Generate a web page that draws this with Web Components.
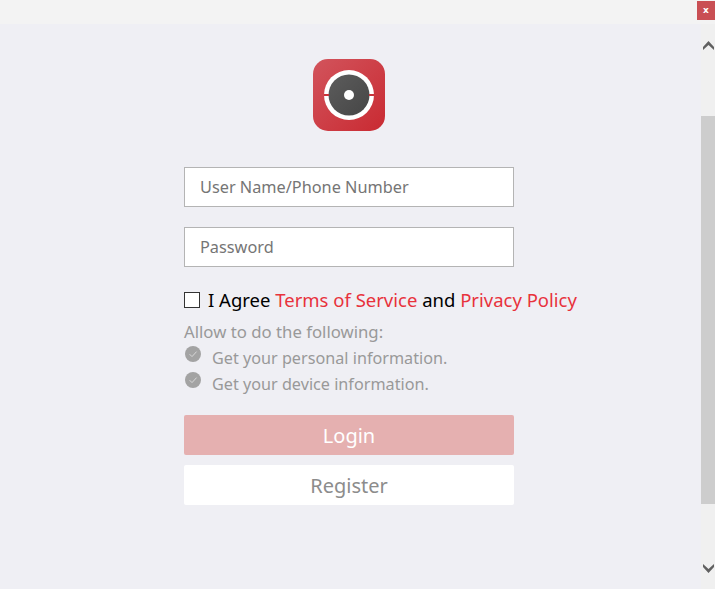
<!DOCTYPE html>
<html>
<head>
<meta charset="utf-8">
<title>Login</title>
<style>
  html, body { margin: 0; height: 100%; overflow: hidden; }
  body { font-family: "Noto Sans", "Open Sans", sans-serif; }
</style>
</head>
<body>
<login-window>
  <app-logo></app-logo>
  <login-field>User Name/Phone Number</login-field>
  <login-field>Password</login-field>
  <agree-row></agree-row>
  <permission-list>
    <permission-item>Get your personal information.</permission-item>
    <permission-item>Get your device information.</permission-item>
  </permission-list>
  <login-button kind="primary">Login</login-button>
  <login-button>Register</login-button>
</login-window>

<script>
class LoginWindow extends HTMLElement {
  constructor() {
    super();
    this.attachShadow({ mode: "open" }).innerHTML = `
      <style>
        :host { display: flex; flex-direction: column; width: 715px; height: 589px; background: #efeff4; overflow: hidden; }
        .title { display: flex; justify-content: flex-end; align-items: flex-start; height: 24px; background: #f3f3f3; flex: none; }
        .close { width: 18px; height: 19px; margin-top: 1px; background: #c94f54; color: #fff; font: bold 9px/18px "DejaVu Sans", sans-serif; text-align: center; }
        .body { display: flex; flex: 1; min-height: 0; }
        .content { flex: 1; display: flex; flex-direction: column; align-items: flex-start; padding: 35px 0 0 184px; }
        .bar { flex: none; width: 14px; display: flex; flex-direction: column; background: #f0f0f0; }
        .arrow { flex: none; height: 92px; display: block; }
        .arrow.down { height: 85px; }
        .arrow svg { display: block; margin: 17px 0 0 2px; }
        .arrow.down svg { margin-top: 60px; }
        .thumb { flex: 1; background: #cdcdcd; }
      </style>
      <div class="title"><div class="close">x</div></div>
      <div class="body">
        <div class="content"><slot></slot></div>
        <div class="bar">
          <span class="arrow"><svg width="11" height="9" viewBox="0 0 11 9"><path d="M5.5 0 L11 6 L11 9 L5.5 4 L0 9 L0 6 Z" fill="#606060"/></svg></span>
          <div class="thumb"></div>
          <span class="arrow down"><svg width="11" height="9" viewBox="0 0 11 9"><path d="M5.5 9 L11 3 L11 0 L5.5 5 L0 0 L0 3 Z" fill="#606060"/></svg></span>
        </div>
      </div>`;
  }
}

class AppLogo extends HTMLElement {
  constructor() {
    super();
    this.attachShadow({ mode: "open" }).innerHTML = `
      <style>
        :host { display: block; width: 72px; height: 72px; margin: 0 0 36px 129px; }
        svg { display: block; }
      </style>
      <svg width="72" height="72" viewBox="0 0 72 72">
        <defs>
          <linearGradient id="g" x1="0" y1="0" x2="1" y2="1">
            <stop offset="0" stop-color="#d2545c"/>
            <stop offset="1" stop-color="#c92a32"/>
          </linearGradient>
          <linearGradient id="d" x1="0" y1="0" x2="1" y2="1">
            <stop offset="0" stop-color="#5c5c5c"/>
            <stop offset="1" stop-color="#464646"/>
          </linearGradient>
        </defs>
        <rect width="72" height="72" rx="15" fill="url(#g)"/>
        <circle cx="36" cy="36" r="25" fill="#fff"/>
        <circle cx="36" cy="36" r="20.5" fill="url(#d)"/>
        <rect x="11" y="35" width="5" height="2" fill="#c9333b"/>
        <rect x="56" y="35" width="5" height="2" fill="#c9333b"/>
        <circle cx="36" cy="36" r="5" fill="#fff"/>
      </svg>`;
  }
}

class LoginField extends HTMLElement {
  constructor() {
    super();
    this.attachShadow({ mode: "open" }).innerHTML = `
      <style>
        :host { display: block; box-sizing: border-box; width: 330px; height: 40px; margin-bottom: 20px; padding-left: 15px; background: #fff; border: 1px solid #b4b4b4; color: #757575; font-size: 16.3px; line-height: 38px; }
      </style>
      <slot></slot>`;
  }
}

class AgreeRow extends HTMLElement {
  constructor() {
    super();
    this.attachShadow({ mode: "open" }).innerHTML = `
      <style>
        :host { display: flex; align-items: center; height: 26px; color: #000; font-size: 18.5px; white-space: nowrap; }
        .box { box-sizing: border-box; width: 16px; height: 16px; margin: 0 8px 0 0; background: #fff; border: 1px solid #333; flex: none; }
        .text { margin-bottom: 2px; }
        a { color: #e8323c; text-decoration: none; }
      </style>
      <span class="box"></span>
      <span class="text">I Agree <a>Terms of Service</a> and <a>Privacy Policy</a></span>`;
  }
}

class PermissionList extends HTMLElement {
  constructor() {
    super();
    this.attachShadow({ mode: "open" }).innerHTML = `
      <style>
        :host { display: block; margin: 6px 0 18px; color: #999; font-size: 16.2px; }
        .head { font-size: 16.75px; line-height: 26px; height: 26px; }
      </style>
      <div class="head">Allow to do the following:</div>
      <slot></slot>`;
  }
}

class PermissionItem extends HTMLElement {
  constructor() {
    super();
    this.attachShadow({ mode: "open" }).innerHTML = `
      <style>
        :host { display: flex; height: 26px; line-height: 26px; white-space: nowrap; }
        svg { flex: none; margin: 1px 11px 0 1px; }
      </style>
      <svg width="16" height="16" viewBox="0 0 16 16">
        <circle cx="8" cy="8" r="8" fill="#a3a3a3"/>
        <path d="M4.6 8.2 L7 10.6 L11.6 5.6" fill="none" stroke="#d8d8d8" stroke-width="1"/>
      </svg>
      <span><slot></slot></span>`;
  }
}

class LoginButton extends HTMLElement {
  constructor() {
    super();
    this.attachShadow({ mode: "open" }).innerHTML = `
      <style>
        :host { display: block; box-sizing: border-box; width: 330px; height: 40px; margin-bottom: 10px; padding-top: 1px; border-radius: 2px; background: #fff; color: #8c8c8c; font-size: 20px; line-height: 40px; text-align: center; }
        :host([kind="primary"]) { background: #e5b0b0; color: #fff; }
      </style>
      <slot></slot>`;
  }
}

customElements.define("login-window", LoginWindow);
customElements.define("app-logo", AppLogo);
customElements.define("login-field", LoginField);
customElements.define("agree-row", AgreeRow);
customElements.define("permission-list", PermissionList);
customElements.define("permission-item", PermissionItem);
customElements.define("login-button", LoginButton);
</script>
</body>
</html>
